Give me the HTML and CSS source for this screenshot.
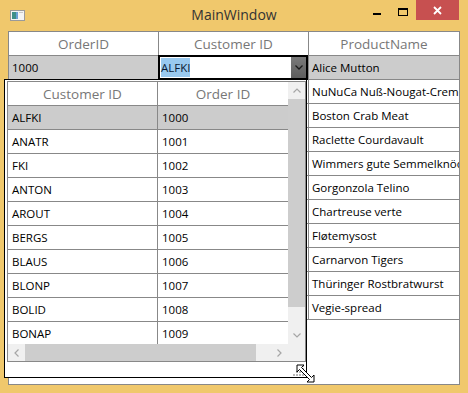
FILE: index.html
```html
<!DOCTYPE html>
<html>
<head>
  <title>MainWindow</title>
  <link rel="stylesheet" href="styles.css">
</head>
<body>
  <div class="window">
    <div class="titlebar">
      <div class="appIcon">
        <svg width="15" height="11" viewBox="0 0 15 11">
          <rect x="0.5" y="0.5" width="14" height="10" fill="#f4f4f4" stroke="#9a9a9a"/>
          <rect x="2" y="2" width="4" height="7" fill="#3d8f8a"/>
          <rect x="6" y="2" width="2" height="7" fill="#6b9fd6"/>
          <rect x="9" y="2" width="4" height="1" fill="#c8c8c8"/>
        </svg>
      </div>
      <div class="title">MainWindow</div>
      <div class="controls">
        <button class="ctl min"><span></span></button>
        <button class="ctl max"><span></span></button>
        <button class="ctl close">
          <svg width="9" height="9" viewBox="0 0 9 9">
            <path d="M1 1 L8 8 M8 1 L1 8" stroke="#fff" stroke-width="1.8"/>
          </svg>
        </button>
      </div>
    </div>

    <div class="client">
      <div class="grid">
        <div class="hcell">OrderID</div>
        <div class="hcell">Customer ID</div>
        <div class="hcell last">ProductName</div>

        <div class="cell sel">1000</div>
        <div class="cell editing">
          <div class="combo">
            <span class="picked">ALFKI</span>
            <span class="dropBtn">
              <svg width="8" height="5" viewBox="0 0 8 5"><polyline points="0.5,0.5 4,4 7.5,0.5" fill="none" stroke="#1a1a1a" stroke-width="1.3"/></svg>
            </span>
          </div>
        </div>
        <div class="cell sel last">Alice Mutton</div>

        <div class="cell"></div><div class="cell"></div><div class="cell last">NuNuCa Nuß-Nougat-Creme</div>
        <div class="cell"></div><div class="cell"></div><div class="cell last">Boston Crab Meat</div>
        <div class="cell"></div><div class="cell"></div><div class="cell last">Raclette Courdavault</div>
        <div class="cell"></div><div class="cell"></div><div class="cell last">Wimmers gute Semmelknödel</div>
        <div class="cell"></div><div class="cell"></div><div class="cell last">Gorgonzola Telino</div>
        <div class="cell"></div><div class="cell"></div><div class="cell last">Chartreuse verte</div>
        <div class="cell"></div><div class="cell"></div><div class="cell last">Fløtemysost</div>
        <div class="cell"></div><div class="cell"></div><div class="cell last">Carnarvon Tigers</div>
        <div class="cell"></div><div class="cell"></div><div class="cell last">Thüringer Rostbratwurst</div>
        <div class="cell"></div><div class="cell"></div><div class="cell last">Vegie-spread</div>
      </div>

      <!-- combobox drop down -->
      <div class="popup">
        <div class="inner">
          <div class="list">
            <div class="hcell">Customer ID</div>
            <div class="hcell last">Order ID</div>
            <div class="cell sel">ALFKI</div><div class="cell sel last">1000</div>
            <div class="cell">ANATR</div><div class="cell last">1001</div>
            <div class="cell">FKI</div><div class="cell last">1002</div>
            <div class="cell">ANTON</div><div class="cell last">1003</div>
            <div class="cell">AROUT</div><div class="cell last">1004</div>
            <div class="cell">BERGS</div><div class="cell last">1005</div>
            <div class="cell">BLAUS</div><div class="cell last">1006</div>
            <div class="cell">BLONP</div><div class="cell last">1007</div>
            <div class="cell">BOLID</div><div class="cell last">1008</div>
            <div class="cell">BONAP</div><div class="cell last">1009</div>
          </div>
          <div class="vscroll">
            <span class="arrow">
              <svg width="8" height="5" viewBox="0 0 8 5"><polyline points="0.5,4.5 4,1 7.5,4.5" fill="none" stroke="#a6a6a6" stroke-width="1.2"/></svg>
            </span>
            <span class="thumb"></span>
            <span class="track"></span>
            <span class="arrow">
              <svg width="8" height="5" viewBox="0 0 8 5"><polyline points="0.5,0.5 4,4 7.5,0.5" fill="none" stroke="#a6a6a6" stroke-width="1.2"/></svg>
            </span>
          </div>
          <div class="hscroll">
            <span class="arrow">
              <svg width="5" height="8" viewBox="0 0 5 8"><polyline points="4.5,0.5 1,4 4.5,7.5" fill="none" stroke="#a6a6a6" stroke-width="1.2"/></svg>
            </span>
            <span class="thumb"></span>
            <span class="track"></span>
            <span class="arrow">
              <svg width="5" height="8" viewBox="0 0 5 8"><polyline points="0.5,0.5 4,4 0.5,7.5" fill="none" stroke="#a6a6a6" stroke-width="1.2"/></svg>
            </span>
          </div>
          <div class="corner"></div>
        </div>
        <svg class="grip" width="14" height="11" viewBox="0 0 14 11">
          <g fill="#b8b8b8">
            <rect x="11" y="0" width="2" height="2"/>
            <rect x="11" y="3" width="2" height="2"/>
            <rect x="8" y="3" width="2" height="2"/>
            <rect x="11" y="6" width="2" height="2"/>
            <rect x="8" y="6" width="2" height="2"/>
            <rect x="5" y="6" width="2" height="2"/>
            <rect x="11" y="9" width="2" height="2"/>
            <rect x="8" y="9" width="2" height="2"/>
            <rect x="5" y="9" width="2" height="2"/>
            <rect x="2" y="9" width="2" height="2"/>
          </g>
        </svg>
      </div>

      <svg class="cursor" width="19" height="19" viewBox="0 0 19 19">
        <path d="M1 1 L8 1 L5.5 3.5 L15.5 13.5 L18 11 L18 18 L11 18 L13.5 15.5 L3.5 5.5 L1 8 Z" fill="#fff" stroke="#000" stroke-width="1"/>
      </svg>
    </div>
  </div>
</body>
</html>
```

FILE: styles.css
```css
* {
  box-sizing: border-box;
}
body {
  margin: 0;
  font-family: "Open Sans", "Noto Sans", sans-serif;
}
.window {
  width: 468px;
  height: 393px;
  display: flex;
  flex-direction: column;
  background: #f0c86c;
  overflow: hidden;
}

/* title bar */
.titlebar {
  flex: none;
  height: 31px;
  display: grid;
  grid-template-columns: 1fr auto 1fr;
}
.appIcon {
  padding: 10px 0 0 10px;
  line-height: 0;
}
.title {
  font-size: 14px;
  line-height: 30px;
  color: #333;
}
.controls {
  justify-self: end;
  align-self: start;
  display: flex;
  margin-right: 9px;
}
.ctl {
  height: 20px;
  border: none;
  padding: 0;
  background: transparent;
  display: flex;
  justify-content: center;
  align-items: flex-start;
}
.ctl.min {
  width: 27px;
  padding-top: 13px;
}
.ctl.min span {
  width: 8px;
  height: 2px;
  background: #000;
}
.ctl.max {
  width: 26px;
  padding-top: 8px;
}
.ctl.max span {
  width: 10px;
  height: 8px;
  border: 1px solid #000;
  border-top-width: 2px;
}
.ctl.close {
  width: 43px;
  align-items: center;
  background: #c75050;
}

/* client area */
.client {
  flex: 1;
  margin: 0 8px 8px;
  position: relative;
  background: #fff;
  border: 1px solid #888;
}
.grid {
  display: grid;
  grid-template-columns: 150px 150px 1fr;
  grid-auto-rows: 24px;
}
.hcell {
  display: flex;
  align-items: center;
  justify-content: center;
  font-size: 13.5px;
  color: #777;
  border-right: 1px solid #888;
  border-bottom: 1px solid #888;
  white-space: nowrap;
}
.cell {
  display: flex;
  align-items: center;
  padding-left: 3px;
  font-size: 11.5px;
  color: #000;
  border-right: 1px solid #888;
  border-bottom: 1px solid #888;
  white-space: nowrap;
  overflow: hidden;
}
.hcell.last,
.cell.last {
  border-right: none;
}
.cell.sel {
  background: #cccccc;
}
.cell.editing {
  position: relative;
  overflow: visible;
}
.combo {
  position: absolute;
  top: -1px;
  left: -1px;
  right: 0;
  bottom: -1px;
  display: flex;
  align-items: stretch;
  padding: 0 0 0 1px;
  border: 2px solid #000;
  background: #fff;
  font-size: 11.5px;
}
.picked {
  display: flex;
  align-items: center;
  margin: 1px 0;
  background: #99c9ef;
  color: #0b1a33;
}
.dropBtn {
  margin-left: auto;
  width: 15px;
  display: flex;
  align-items: center;
  justify-content: center;
  background: linear-gradient(#7a7a7a, #5e5e5e);
}

/* dropdown popup */
.popup {
  position: absolute;
  left: -5px;
  top: 47px;
  width: 303px;
  height: 299px;
  padding: 1px 0 15px 2px;
  border: 1px solid #000;
  background: #fff;
}
.inner {
  height: 100%;
  display: grid;
  grid-template-columns: 1fr 17px;
  grid-template-rows: 1fr 17px;
  border: 1px solid #888;
}
.list {
  display: grid;
  grid-template-columns: 150px 1fr;
  grid-auto-rows: 24px;
  overflow: hidden;
}
.list .hcell {
  font-size: 13.5px;
}
.list .cell {
  padding-left: 4px;
}
.vscroll,
.hscroll,
.corner {
  background: #f0f0f0;
  display: flex;
}
.vscroll {
  flex-direction: column;
}
.arrow {
  flex: none;
  width: 17px;
  height: 17px;
  display: flex;
  align-items: center;
  justify-content: center;
}
.thumb {
  flex: none;
  background: #cdcdcd;
}
.vscroll .thumb {
  height: 208px;
}
.hscroll .thumb {
  width: 231px;
}
.track {
  flex: 1;
}
.grip {
  position: absolute;
  right: 1px;
  bottom: 1px;
}
.cursor {
  position: absolute;
  left: 287px;
  top: 332px;
}
```
